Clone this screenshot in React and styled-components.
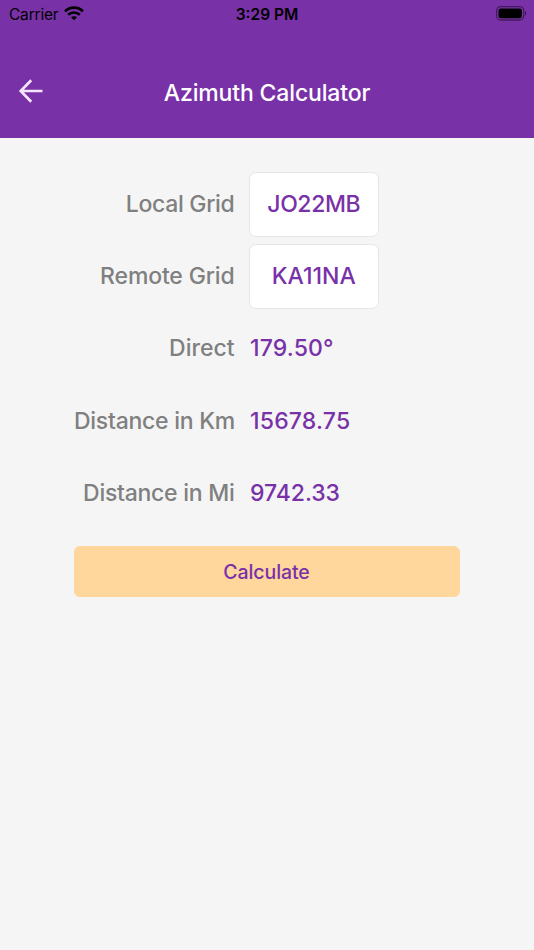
import React, { useState } from 'react'
import styled, { createGlobalStyle } from 'styled-components'

const GlobalStyle = createGlobalStyle`
  * {
    box-sizing: border-box;
  }
  body {
    margin: 0;
    background: #f5f5f5;
    font-family: Inter, "Liberation Sans", sans-serif;
  }
`;

const Screen = styled.div`
  min-height: 950px;
  background: #f5f5f5;
`;

const Header = styled.header`
  height: 138px;
  background: #7931a8;
`;

const StatusBar = styled.div`
  display: grid;
  grid-template-columns: 1fr auto 1fr;
  align-items: center;
  height: 26px;
  padding: 0 7px 0 9px;
  color: #000;
`;

const Carrier = styled.div`
  display: flex;
  align-items: center;
  gap: 6px;
  padding-top: 2px;
  font-size: 15.5px;
  letter-spacing: -0.2px;

  svg {
    margin-bottom: 2px;
  }
`;

const Time = styled.div`
  padding: 2px 2px 0 0;
  font-size: 15.5px;
  font-weight: 600;
  letter-spacing: 0;
`;

const Battery = styled.div`
  display: flex;
  justify-content: flex-end;
`;

const NavBar = styled.div`
  display: grid;
  grid-template-columns: 62px 1fr 62px;
  align-items: center;
  height: 111px;
  padding-bottom: 20px;
  padding-top: 38px;
`;

const BackButton = styled.button`
  display: flex;
  align-items: center;
  justify-content: center;
  height: 53px;
  padding: 0 0 2px;
  border: none;
  background: none;
`;

const Title = styled.h1`
  margin: 0;
  padding-top: 3px;
  color: #fff;
  font-size: 23px;
  font-weight: 500;
  line-height: 53px;
  letter-spacing: -0.15px;
  text-align: center;
`;

const Form = styled.main`
  width: 386px;
  margin: 0 auto;
  padding-top: 30px;
`;

const Row = styled.div`
  display: grid;
  grid-template-columns: 160.5px 1fr;
  column-gap: 14.5px;
  align-items: center;
  height: 72.2px;
`;

const Label = styled.label`
  color: #808080;
  font-size: 23px;
  font-weight: 500;
  letter-spacing: ${({ $spacing }) => $spacing || 0}px;
  text-align: right;
  white-space: nowrap;
`;

const Field = styled.input`
  width: 129.5px;
  height: 65px;
  padding: 0;
  border: 1px solid #e6e6e6;
  border-radius: 7px;
  outline: none;
  background: #fff;
  color: #7931a8;
  font-family: inherit;
  font-size: 23px;
  font-weight: 500;
  letter-spacing: ${({ $spacing }) => $spacing || 0}px;
  text-align: center;
`;

const Value = styled.div`
  padding-left: 1px;
  color: #7931a8;
  font-size: 23px;
  font-weight: 500;
  letter-spacing: ${({ $spacing }) => $spacing || 0}px;
`;

const CalculateButton = styled.button`
  display: block;
  width: 100%;
  height: 51.5px;
  margin-top: 17px;
  padding: 0 1px 0 0;
  border: none;
  border-radius: 6px;
  background: #ffd69c;
  color: #7931a8;
  font-family: inherit;
  font-size: 19.5px;
  font-weight: 500;
  letter-spacing: -0.1px;
`;

const WifiIcon = () => (
  <svg width="20" height="15" viewBox="0 0 20 15" fill="none" stroke="#000" strokeWidth="2.6">
    <path d="M1 5.4C6 0.4 14 0.4 19 5.4" />
    <path d="M4.2 8.8C7.4 5.7 12.6 5.7 15.8 8.8" />
    <path d="M10 14.3L7 11.3C8.7 9.8 11.3 9.8 13 11.3Z" fill="#000" stroke="none" />
  </svg>
)

const BatteryIcon = () => (
  <svg width="31" height="15" viewBox="0 0 31 15">
    <rect x="0.7" y="0.7" width="27" height="13.3" rx="3.8" fill="none" stroke="#000" strokeOpacity="0.45" strokeWidth="1.3" />
    <rect x="2.5" y="2.5" width="23.4" height="9.7" rx="2.2" fill="#000" />
    <path d="M29 5.1C30.7 5.7 30.7 9 29 9.6Z" fill="#000" fillOpacity="0.5" />
  </svg>
)

const BackIcon = () => (
  <svg width="26" height="26" viewBox="0 0 26 26" fill="none" stroke="#f4e5fc" strokeWidth="2.7">
    <path d="M13.2 2.2L2.7 13L13.2 23.8M3 13H24.5" />
  </svg>
)

const results = [
  { label: "Direct", value: "179.50°", labelSpacing: 0, valueSpacing: 0.15 },
  { label: "Distance in Km", value: "15678.75", labelSpacing: -0.26, valueSpacing: 0.2 },
  { label: "Distance in Mi", value: "9742.33", labelSpacing: -0.26, valueSpacing: -0.05 },
]

const App = () => {
  const [localGrid, setLocalGrid] = useState("JO22MB");
  const [remoteGrid, setRemoteGrid] = useState("KA11NA");

  return (
    <Screen>
      <GlobalStyle />
      <Header>
        <StatusBar>
          <Carrier>Carrier <WifiIcon /></Carrier>
          <Time>3:29 PM</Time>
          <Battery><BatteryIcon /></Battery>
        </StatusBar>
        <NavBar>
          <BackButton aria-label="Back"><BackIcon /></BackButton>
          <Title>Azimuth Calculator</Title>
        </NavBar>
      </Header>
      <Form>
        <Row>
          <Label htmlFor="local" $spacing={-0.3}>Local Grid</Label>
          <Field id="local" $spacing={-0.4} value={localGrid} onChange={(e) => setLocalGrid(e.target.value)} />
        </Row>
        <Row>
          <Label htmlFor="remote" $spacing={-0.15}>Remote Grid</Label>
          <Field id="remote" value={remoteGrid} onChange={(e) => setRemoteGrid(e.target.value)} />
        </Row>
        {results.map((item) => (
          <Row key={item.label}>
            <Label as="div" $spacing={item.labelSpacing}>{item.label}</Label>
            <Value $spacing={item.valueSpacing}>{item.value}</Value>
          </Row>
        ))}
        <CalculateButton>Calculate</CalculateButton>
      </Form>
    </Screen>
  )
}

export default App
